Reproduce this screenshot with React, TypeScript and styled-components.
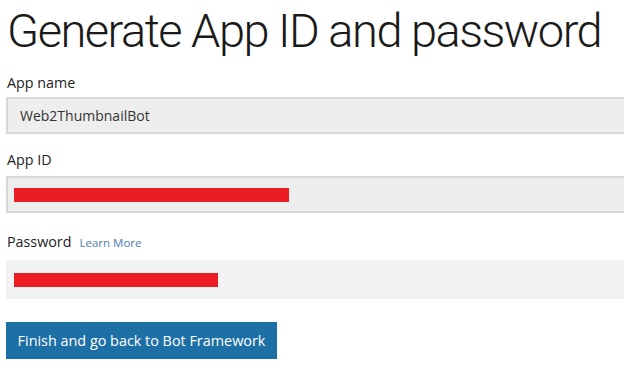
import React from "react"
import styled, { createGlobalStyle } from "styled-components"

const GlobalStyle = createGlobalStyle`
    html, body {
        margin: 0;
        padding: 0;
        background: #ffffff;
        overflow: hidden;
    }
    body {
        font-family: "Open Sans", "Noto Sans", sans-serif;
        color: #222222;
    }
`

const Page = styled.div`
    display: flex;
    flex-direction: column;
    padding: 0 0 0 6px;
    width: 618px;
`

const Title = styled.h1`
    margin: 0;
    padding-left: 1px;
    font-family: Roboto, "Open Sans", sans-serif;
    font-weight: 300;
    font-size: 47px;
    letter-spacing: -1.5px;
    line-height: 62px;
    color: #1a1a1a;
    white-space: nowrap;
`

const Field = styled.div`
    display: flex;
    flex-direction: column;
`

const LabelRow = styled.div<{ $top: number; $bottom: number }>`
    display: flex;
    align-items: baseline;
    gap: 8px;
    line-height: 20px;
    margin-top: ${(p) => p.$top}px;
    margin-bottom: ${(p) => p.$bottom}px;
`

const Label = styled.label`
    font-size: 14.3px;
    color: #222222;
    padding-left: 1px;
`

const LearnMore = styled.a`
    font-size: 11.5px;
    color: #4b7db0;
    text-decoration: none;
`

const Input = styled.div<{ $light?: boolean }>`
    display: flex;
    align-items: center;
    height: ${(p) => (p.$light ? 39 : 37)}px;
    box-sizing: border-box;
    padding-left: 12px;
    background: ${(p) => (p.$light ? "#f2f2f2" : "#eeeeee")};
    border: 2px solid ${(p) => (p.$light ? "#f2f2f2" : "#d8d8d8")};
    border-right: none;
    font-size: 14px;
    color: #333333;
`

const Redacted = styled.span<{ $width: number }>`
    display: block;
    width: ${(p) => p.$width}px;
    height: 14px;
    margin-left: -6px;
    background: #ec1c24;
`

const Button = styled.button`
    align-self: flex-start;
    margin-top: 23px;
    height: 37px;
    width: 271px;
    border: none;
    background: #1d70a6;
    color: #ffffff;
    font-family: "Open Sans", "Noto Sans", sans-serif;
    font-size: 14.4px;
    padding: 0;
    cursor: pointer;
`

export default function App() {
    return (
        <>
            <GlobalStyle />
            <Page>
                <Title>Generate App ID and password</Title>
                <Field>
                    <LabelRow $top={11} $bottom={4}>
                        <Label>App name</Label>
                    </LabelRow>
                    <Input>Web2ThumbnailBot</Input>
                </Field>
                <Field>
                    <LabelRow $top={16} $bottom={6}>
                        <Label>App ID</Label>
                    </LabelRow>
                    <Input>
                        <Redacted $width={275} />
                    </Input>
                </Field>
                <Field>
                    <LabelRow $top={19} $bottom={7}>
                        <Label>Password</Label>
                        <LearnMore href="#">Learn More</LearnMore>
                    </LabelRow>
                    <Input $light>
                        <Redacted $width={204} />
                    </Input>
                </Field>
                <Button>Finish and go back to Bot Framework</Button>
            </Page>
        </>
    )
}
